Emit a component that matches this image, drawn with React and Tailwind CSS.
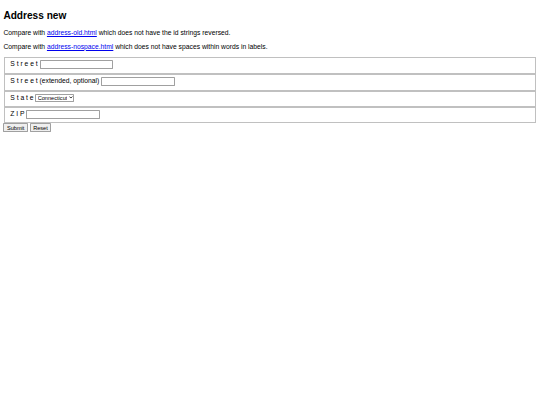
import React from 'react';

const rows = [
  { id: 'street', label: 'S t r e e t', kind: 'text' },
  { id: 'street2', label: 'S t r e e t (extended, optional)', kind: 'text' },
  { id: 'state', label: 'S t a t e', kind: 'select' },
  { id: 'zip', label: 'Z I P', kind: 'text' },
];

const Field = ({ row }) => {
  return (
    <fieldset className="mx-[2px] border-2 [border-style:groove] border-[#c0c0c0] pt-[5px] px-[12px] pb-[9px]">
      <label htmlFor={row.id}>{row.label} </label>
      {row.kind === 'select' ? (
        <span className="relative inline-block align-middle">
          <select
            id={row.id}
            defaultValue="CT"
            className="appearance-none h-[19px] w-[92px] pl-[3px] pr-[14px] border border-[#a0a0a0] rounded-[2px] bg-white text-[13.33px] leading-[normal] text-black"
          >
            <option value="CT">Connecticut</option>
          </select>
          <svg
            className="absolute right-[4px] top-[6px] pointer-events-none"
            width="9"
            height="7"
            viewBox="0 0 10 7"
            fill="none"
            stroke="#000"
            strokeWidth="2"
          >
            <path d="M1 1l4 4 4-4" />
          </svg>
        </span>
      ) : (
        <input
          id={row.id}
          type="text"
          className="h-[21px] w-[174px] border border-[#a0a0a0] rounded-[2px] px-[2px] text-[13.33px] align-middle bg-white"
        />
      )}
    </fieldset>
  );
};

const App = () => {
  return (
    <div className="[zoom:0.421875] min-h-[960px] bg-white p-2 text-base leading-[normal] text-black font-['Liberation_Sans',Arial,sans-serif]">
      <h2 className="text-[24px] leading-[normal] font-bold mt-[15px] mb-[20px]">Address new</h2>
      <p className="my-4">
        Compare with{' '}
        <a href="#" className="text-[#0000ee] underline">address-old.html</a> which does not have the id strings reversed.
      </p>
      <p className="my-4">
        Compare with{' '}
        <a href="#" className="text-[#0000ee] underline">address-nospace.html</a> which does not have spaces within words in labels.
      </p>
      <form className="mt-[17px]">
        {rows.map((row) => (
          <Field key={row.id} row={row} />
        ))}
        <div className="flex gap-[4px] text-[13.33px] leading-[normal]">
          <button type="button" className="h-[21px] px-[6px] border border-[#a0a0a0] rounded-[2px] bg-[#efefef]">Submit</button>
          <button type="button" className="h-[21px] px-[6px] border border-[#a0a0a0] rounded-[2px] bg-[#efefef]">Reset</button>
        </div>
      </form>
    </div>
  );
};

export default App;
